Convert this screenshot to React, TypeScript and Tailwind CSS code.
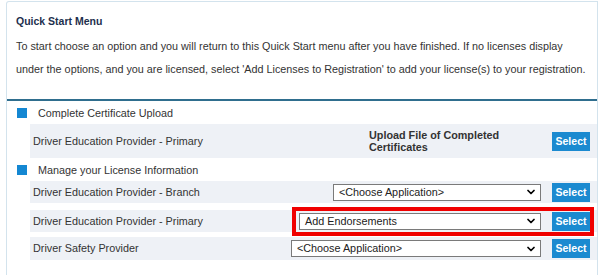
import { ChevronDown } from "lucide-react";

const font = { fontFamily: '"Liberation Sans", Arial, sans-serif' };

function SelectButton() {
  return (
    <button className="h-[19px] w-[38px] bg-[#1b8ad0] text-[10.5px] font-bold leading-none text-white">
      Select
    </button>
  );
}

function AppSelect({ value, width }: { value: string; width: string }) {
  return (
    <div
      role="combobox"
      className={`flex h-[17px] items-center justify-between border border-[#7a7a7a] bg-white pl-[5px] pr-[3px] ${width}`}
    >
      <span className="text-[10.8px] leading-none text-[#222]">{value}</span>
      <ChevronDown className="h-[12px] w-[12px] text-black" strokeWidth={3.5} />
    </div>
  );
}

function SectionTitle({ label, className = "" }: { label: string; className?: string }) {
  return (
    <div className={`flex h-[20px] items-center pl-[10px] ${className}`}>
      <span className="h-[10px] w-[10px] bg-[#1487d2]" />
      <span className="ml-[11px] text-[10.8px] text-[#333]">{label}</span>
    </div>
  );
}

function Row({ label, children, className = "" }: { label: string; children: React.ReactNode; className?: string }) {
  return (
    <div className={`ml-[23px] flex items-center justify-between bg-[#eef1f6] pl-[3px] pr-[7px] ${className}`}>
      <span className="text-[10.8px] text-[#333]">{label}</span>
      <div className="flex items-center gap-[11px]">{children}</div>
    </div>
  );
}

export default function App() {
  return (
    <div className="relative h-[275px] w-[604px] overflow-hidden bg-white" style={font}>
      <div className="ml-[6px] mt-[1px] flex h-[274px] w-[592px] flex-col rounded-tl-[3px] border-l border-r border-t border-[#d3e3ed]">
        {/* Quick start header */}
        <div className="h-[99px] shrink-0 border-b-2 border-[#2f6e8e] pl-[9px]">
          <div className="mt-[12px] text-[10.5px] font-bold leading-[14px] text-[#1d2f4d]">Quick Start Menu</div>
          <p className="mt-[7px] text-[10.8px] leading-[23px] text-[#333]">
            To start choose an option and you will return to this Quick Start menu after you have finished. If no licenses display
            <br />
            under the options, and you are licensed, select 'Add Licenses to Registration' to add your license(s) to your registration.
          </p>
        </div>

        <SectionTitle label="Complete Certificate Upload" className="mt-[2px]" />
        <Row label="Driver Education Provider - Primary" className="mt-[1px] h-[34px]">
          <div className="w-[172px] text-[10.8px] font-bold leading-[12px] text-[#333]">
            Upload File of Completed
            <br />
            Certificates
          </div>
          <SelectButton />
        </Row>

        <SectionTitle label="Manage your License Information" className="mt-[2px]" />
        <Row label="Driver Education Provider - Branch" className="mt-[1px] h-[22px]">
          <AppSelect value="<Choose Application>" width="w-[208px]" />
          <SelectButton />
        </Row>
        <Row label="Driver Education Provider - Primary" className="relative mt-[7px] h-[22px]">
          <AppSelect value="Add Endorsements" width="w-[242px]" />
          <SelectButton />
          {/* highlight annotation */}
          <div className="pointer-events-none absolute left-[262px] top-[-3px] h-[29px] w-[302px] border-[4px] border-[#f00000]" />
        </Row>
        <Row label="Driver Safety Provider" className="mt-[5px] h-[23px]">
          <AppSelect value="<Choose Application>" width="w-[250px]" />
          <SelectButton />
        </Row>
      </div>
    </div>
  );
}
